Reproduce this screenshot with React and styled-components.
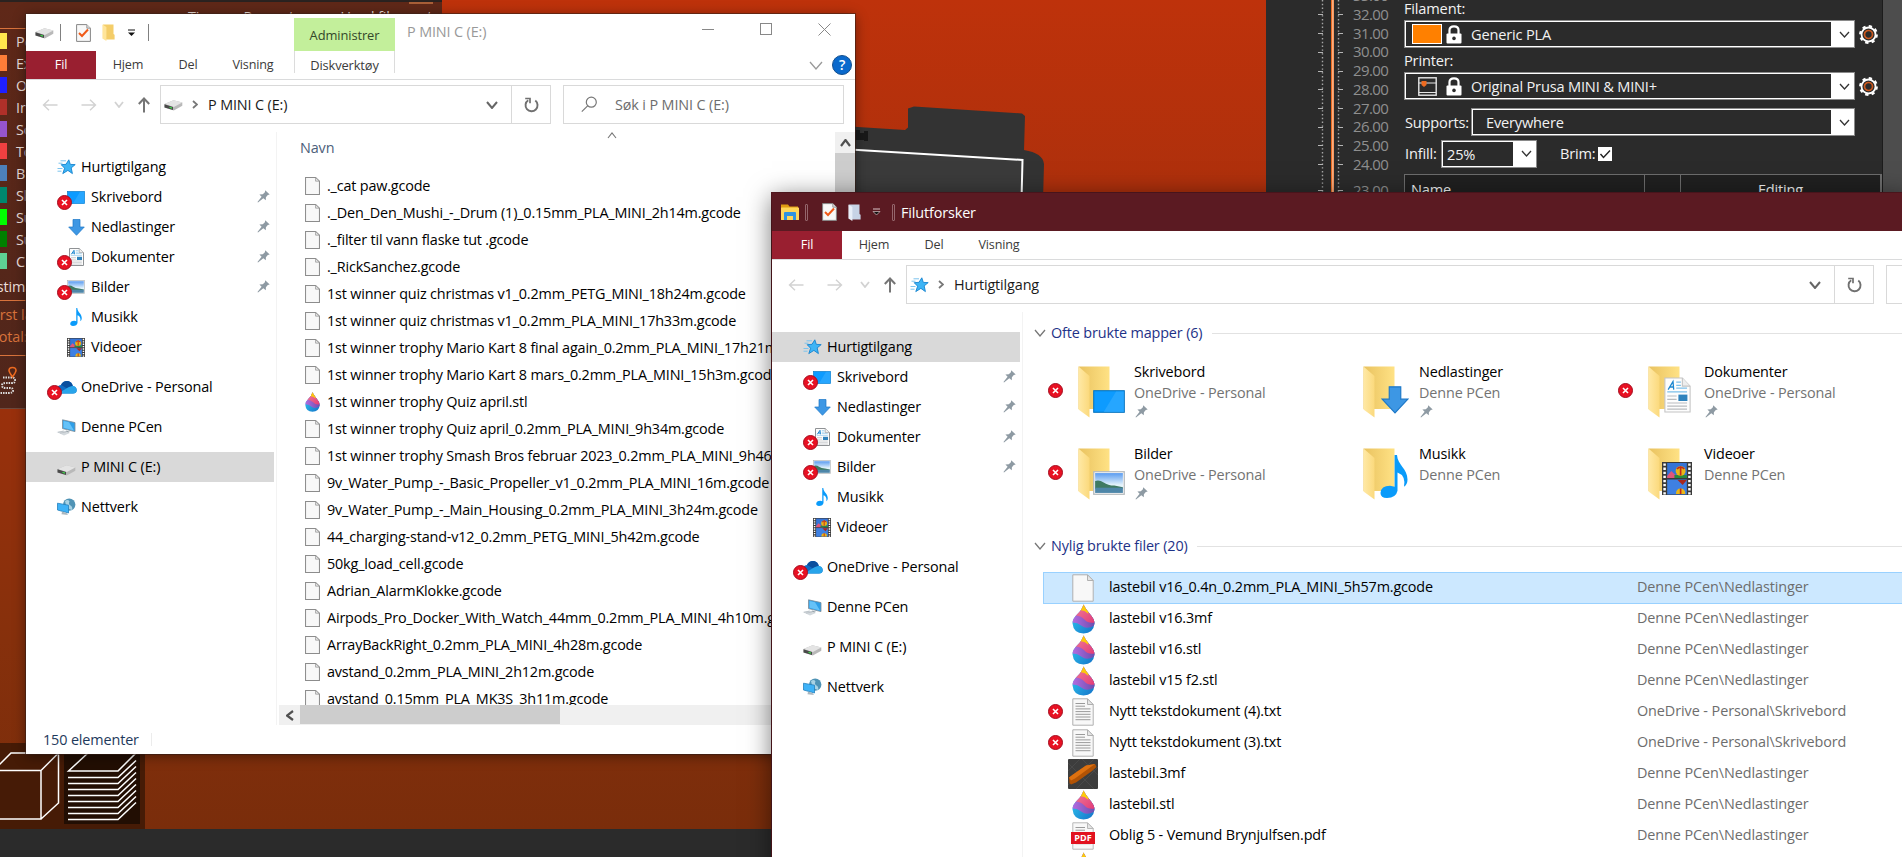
import React from "react";
import styled, { createGlobalStyle } from "styled-components";

const Global = createGlobalStyle`
  * { box-sizing: border-box; }
  html, body { margin: 0; padding: 0; overflow: hidden; }
  body { font-family: "Open Sans", "Noto Sans", sans-serif; font-size: 14.4px; letter-spacing: -0.13px; color: #000; }
  svg { display: block; flex: none; }
`;

/* ---------- desktop ---------- */

const Desktop = styled.div`
  position: relative;
  width: 1902px;
  height: 857px;
  overflow: hidden;
  white-space: nowrap;
`;

const Slicer = styled.div`
  display: flex;
  flex-direction: column;
  height: 857px;
  background: #2b2b2b;
`;

const SlicerMain = styled.div`
  display: flex;
  height: 829px;
`;

const Viewport = styled.div`
  position: relative;
  width: 1266px;
  background: linear-gradient(#be320b 0, #ae300c 190px, #9a300c 400px, #86300c 640px, #7a2d0b 829px);
  overflow: hidden;
`;

const Model = styled.svg`
  position: absolute;
  left: 850px;
  top: 100px;
`;

const Legend = styled.div`
  position: absolute;
  left: 0;
  top: 0;
  width: 442px;
  height: 409px;
  border-top: 2px solid #2a2220;
  border-bottom: 1px solid #6d4a3e;
  background: linear-gradient(#5f2818, #50261b);
  color: #ecdfda;
  overflow: hidden;
`;

const LegendMark = styled.i`
  position: absolute;
  left: 409px;
  top: -2px;
  width: 24px;
  height: 4px;
  background: #a95f38;
`;

const LegendHead = styled.div`
  display: flex;
  gap: 23px;
  height: 27px;
  padding: 5px 0 0 188px;
  line-height: 20px;
  border-bottom: 1px solid #d9733c;
`;

const LegendRows = styled.div`
  padding-top: 1px;
`;

const LegendRow = styled.div`
  display: flex;
  align-items: center;
  gap: 9px;
  height: 22px;
  &::before {
    content: "";
    width: 7px;
    height: 16px;
    background: ${(p) => p.$color};
  }
`;

const LegendTotals = styled.div`
  height: 56px;
  border-top: 1px solid #d9733c;
  border-bottom: 1px solid #d9733c;
  color: #d9733c;
  line-height: 22px;
  padding-top: 3px;
`;

const LegendTitle = styled.div`
  height: 28px;
  line-height: 22px;
  margin-left: -11px;
  padding-top: 4px;
`;

const Pull = styled.div`
  margin-left: ${(p) => -p.$by}px;
`;

const ViewToggle = styled.div`
  position: absolute;
  left: 0;
  bottom: 0;
  width: 145px;
  height: 86px;
  background: #461b06;
`;

/* ---------- slicer side panel ---------- */

const Ruler = styled.div`
  display: flex;
  width: 138px;
  height: 193px;
  overflow: hidden;
  padding-left: 52px;
`;

const RulerNumbers = styled.div`
  display: flex;
  flex-direction: column;
  margin-top: -14px;
  padding-left: 5px;
  color: #8f8f8f;
  font-size: 15px;
  letter-spacing: -0.6px;
`;

const RulerNumber = styled.span`
  flex: none;
  height: ${(p) => p.$h || 18.75}px;
  line-height: 18px;
`;

const Settings = styled.div`
  width: 478px;
  height: 193px;
  overflow: hidden;
  color: #f2f2f2;
  font-size: 14.6px;
  letter-spacing: -0.18px;
`;

const SettingLabel = styled.div`
  height: ${(p) => p.$h}px;
  line-height: ${(p) => p.$lh}px;
`;

const SettingRow = styled.div`
  display: flex;
  align-items: center;
  height: ${(p) => p.$h || 28}px;
`;

const Caption = styled.span`
  width: ${(p) => p.$w}px;
  padding: 0 0 1px 1px;
`;

const Combo = styled.div`
  display: flex;
  align-items: center;
  width: ${(p) => p.$w}px;
  height: 28px;
  flex: none;
  border: 1px solid #8a8a8a;
  outline: 1.5px solid #fff;
  outline-offset: -2.5px;
  padding-left: ${(p) => p.$pad}px;
`;

const ComboValue = styled.span`
  flex: 1;
  padding-left: ${(p) => p.$pl || 0}px;
`;

const ComboArrow = styled.div`
  display: flex;
  align-items: center;
  justify-content: center;
  width: 23px;
  height: 26px;
  padding-left: 3px;
  background: #fff;
`;

const Swatch = styled.div`
  width: 30px;
  height: 20px;
  margin-right: 4px;
  background: #ff8000;
  border: 1px solid #fff;
`;

const CogSlot = styled.div`
  margin-left: 4px;
`;

const Check = styled.div`
  width: 14px;
  height: 14px;
  background: #fff;
`;

const ObjectTable = styled.div`
  display: grid;
  grid-template-columns: 240px 36px 1fr;
  height: 30px;
  margin-top: 11px;
  border: 1px solid #6c6c6c;
  background: #202020;
`;

const ObjectHead = styled.div`
  padding: 4px 0 0 ${(p) => (p.$center ? 0 : 6)}px;
  text-align: ${(p) => (p.$center ? "center" : "left")};
  border-right: 1px solid #6c6c6c;
`;

const PanelScroll = styled.div`
  width: 20px;
  height: 193px;
  background: #4d4d4d;
  border-left: 1px solid #1c1c1c;
`;

/* ---------- explorer windows ---------- */

const Win = styled.div`
  position: absolute;
  left: ${(p) => p.$x}px;
  top: ${(p) => p.$y}px;
  width: ${(p) => p.$w}px;
  height: ${(p) => p.$h}px;
  display: flex;
  flex-direction: column;
  background: #fff;
  box-shadow: ${(p) => (p.$active ? "0 4px 24px rgba(0,0,0,.55), 0 0 0 1px #5b1a22" : "0 2px 12px rgba(0,0,0,.45), 0 0 0 1px rgba(70,40,30,.6)")};
`;

const TitleBar = styled.div`
  display: flex;
  align-items: center;
  height: ${(p) => (p.$active ? 38 : 37)}px;
  flex: none;
  background: ${(p) => (p.$active ? "#5b1a22" : "#fff")};
  color: ${(p) => (p.$active ? "#fff" : "#999")};
  padding-left: 9px;
`;

const Divider = styled.i`
  width: ${(p) => (p.$light ? 3 : 1)}px;
  height: 17px;
  background: ${(p) => (p.$light ? "transparent" : "#808080")};
  border: ${(p) => (p.$light ? "1px solid #94656b" : "none")};
  border-radius: ${(p) => (p.$light ? 1 : 0)}px;
  margin: 0 ${(p) => p.$r || 0}px 0 ${(p) => p.$l || 0}px;
`;

const Gap = styled.i`
  width: ${(p) => p.$w}px;
  flex: none;
`;

const ContextTab = styled.div`
  width: 101px;
  height: 33px;
  margin: 4px 12px 0 145px;
  background: #c3ef9b;
  color: #33472a;
  font-size: 12.9px;
  letter-spacing: -0.1px;
  line-height: 34px;
  text-align: center;
`;

const WinTitle = styled.span`
  flex: 1;
  font-size: 14.4px;
  margin-top: ${(p) => p.$mt || 0}px;
`;

const Controls = styled.div`
  display: flex;
  align-items: center;
  gap: 46px;
  padding: 0 24px 7px 0;
`;

const Tabs = styled.div`
  display: flex;
  align-items: stretch;
  height: 29px;
  flex: none;
  border-bottom: 1px solid #dadbdc;
  font-size: 12.6px;
  letter-spacing: -0.15px;
  line-height: 28px;
  color: #3b3b3b;
`;

const Tab = styled.div`
  width: ${(p) => p.$w}px;
  text-align: center;
  background: ${(p) => (p.$file ? "#991f30" : "transparent")};
  color: ${(p) => (p.$file ? "#fff" : "inherit")};
`;

const ToolTab = styled.div`
  width: 101px;
  height: 22px;
  margin-left: 4px;
  text-align: center;
  font-size: 12.9px;
  border-left: 1px solid #dcdcdc;
  border-right: 1px solid #dcdcdc;
`;

const TabEnd = styled.div`
  display: flex;
  align-items: center;
  gap: 9px;
  margin-left: auto;
  padding-right: 3px;
`;

const HelpBadge = styled.div`
  width: 20px;
  height: 20px;
  border: 1px solid #14508f;
  border-radius: 50%;
  background: #0a69cc;
  color: #fff;
  font-size: 14px;
  font-weight: 600;
  line-height: 18px;
  text-align: center;
`;

const NavBar = styled.div`
  display: flex;
  align-items: center;
  height: 44px;
  flex: none;
  padding: 5px 0 0 16px;
`;

const AddressBox = styled.div`
  display: flex;
  align-items: center;
  width: ${(p) => p.$w}px;
  height: 39px;
  flex: none;
  margin-left: 8px;
  border: 1px solid #d9d9d9;
  padding-left: 3px;
  color: #1a1a1a;
`;

const AddressText = styled.span`
  flex: 1;
  padding-left: 10px;
`;

const RefreshCell = styled.div`
  display: flex;
  align-items: center;
  justify-content: center;
  align-self: stretch;
  width: 39px;
  margin-left: 13px;
  border-left: 1px solid #d9d9d9;
`;

const SearchBox = styled.div`
  display: flex;
  align-items: center;
  gap: 17px;
  width: ${(p) => p.$w}px;
  height: 39px;
  flex: none;
  margin-left: 12px;
  border: 1px solid #d9d9d9;
  padding-left: 17px;
  color: #6d6d6d;
`;

const Body = styled.div`
  display: flex;
  flex: 1;
  min-height: 0;
  margin-top: 8px;
`;

const Sidebar = styled.div`
  width: 251px;
  flex: none;
  border-right: 1px solid #f3f3f3;
  padding-top: 20px;
`;

const SideRow = styled.div`
  display: flex;
  align-items: center;
  width: 248px;
  height: 30px;
  gap: 6px;
  margin-top: ${(p) => (p.$spaced ? 10 : 0)}px;
  padding: 0 4px 0 ${(p) => (p.$sub ? 41 : 31)}px;
  background: ${(p) => (p.$selected ? "#d9d9d9" : "transparent")};
`;

const SideIcon = styled.div`
  position: relative;
  width: 18px;
  height: 20px;
  display: flex;
  align-items: center;
  justify-content: center;
  padding-top: ${(p) => p.$drop || 0}px;
`;

const SideText = styled.span`
  flex: 1;
  line-height: 28px;
`;

const PinSlot = styled.div`
  padding-bottom: 2px;
`;

const BadgeSlot = styled.div`
  position: absolute;
  left: -10px;
  top: 8px;
`;

const Files = styled.div`
  display: flex;
  flex-direction: column;
  flex: 1;
  min-width: 0;
`;

const FilesMain = styled.div`
  display: flex;
  flex: 1;
  min-height: 0;
`;

const FileList = styled.div`
  flex: 1;
  overflow: hidden;
  padding-left: 28px;
`;

const ColumnHead = styled.div`
  display: flex;
  align-items: flex-start;
  height: 40px;
  margin-left: -5px;
  color: #4c607a;
`;

const ColumnName = styled.span`
  width: 307px;
  padding-top: 6px;
`;

const FileRow = styled.div`
  display: flex;
  align-items: center;
  gap: 7px;
  height: 27px;
`;

const FileName = styled.span`
  letter-spacing: -0.17px;
`;

const VScroll = styled.div`
  width: 20px;
  background: #cdcdcd;
`;

const ScrollButton = styled.div`
  display: flex;
  align-items: center;
  justify-content: center;
  width: ${(p) => (p.$h ? 21 : 20)}px;
  height: ${(p) => (p.$h ? 20 : 21)}px;
  background: #f0f0f0;
`;

const HScroll = styled.div`
  display: flex;
  height: 20px;
  margin-left: 2px;
  background: #f0f0f0;
`;

const HThumb = styled.div`
  width: 260px;
  height: 19px;
  background: #cdcdcd;
`;

const Status = styled.div`
  display: flex;
  align-items: center;
  height: 29px;
  flex: none;
  padding-left: 17px;
  color: #1e395b;
  &::after {
    content: "";
    width: 1px;
    height: 13px;
    margin-left: 12px;
    background: #ececec;
  }
`;

const Content = styled.div`
  flex: 1;
  min-width: 0;
  padding-left: 11px;
`;

const GroupHead = styled.div`
  display: flex;
  align-items: center;
  height: 22px;
  margin-top: ${(p) => p.$mt}px;
  color: #1e3287;
  &::after {
    content: "";
    flex: 1;
    height: 1px;
    margin-left: 9px;
    background: #e2e2e2;
  }
`;

const GroupName = styled.span`
  padding: 0 0 2px 5px;
`;

const Tiles = styled.div`
  display: grid;
  grid-template-columns: repeat(3, 285px);
  grid-auto-rows: 82px;
  padding: 18px 0 0 14px;
`;

const Tile = styled.div`
  display: flex;
`;

const TileState = styled.div`
  width: 30px;
  padding-top: 21px;
`;

const TileText = styled.div`
  display: flex;
  flex-direction: column;
  line-height: 21px;
  padding-left: 5px;
  margin-top: -1px;
  color: #737373;
`;

const TileName = styled.span`
  color: #000;
`;

const TilePin = styled.div`
  padding: 2px 0 0 1px;
`;

const Recent = styled.div`
  padding: 15px 0 0 9px;
`;

const RecentRow = styled.div`
  display: flex;
  align-items: center;
  height: ${(p) => (p.$selected ? 32 : 31)}px;
  margin-bottom: ${(p) => (p.$selected ? -1 : 0)}px;
  padding-left: ${(p) => (p.$selected ? 4 : 5)}px;
  background: ${(p) => (p.$selected ? "#cce8ff" : "transparent")};
  border: ${(p) => (p.$selected ? "1px solid #99d1ff" : "none")};
  border-right: none;
`;

const RecentState = styled.div`
  width: 20px;
`;

const RecentIcon = styled.div`
  width: 30px;
  display: flex;
  justify-content: center;
`;

const RecentName = styled.span`
  width: 539px;
  padding: 0 0 3px 11px;
  letter-spacing: -0.15px;
`;

const RecentPath = styled.span`
  color: #6d6d6d;
  padding-bottom: 3px;
  letter-spacing: -0.08px;
`;

/* ---------- icons ---------- */

const Chevron = ({ w = 12, h = 7, color = "#666", sw = 1.3, dir = "down" }) => {
  const paths = {
    down: `M1 1 L${w / 2} ${h - 1} L${w - 1} 1`,
    up: `M1 ${h - 1} L${w / 2} 1 L${w - 1} ${h - 1}`,
    right: `M1 1 L${w - 1} ${h / 2} L1 ${h - 1}`,
    left: `M${w - 1} 1 L1 ${h / 2} L${w - 1} ${h - 1}`,
  };
  return (
    <svg width={w} height={h}><path d={paths[dir]} fill="none" stroke={color} strokeWidth={sw} /></svg>
  );
};

const ErrorBadge = () => (
  <svg width="15" height="15" viewBox="0 0 15 15">
    <circle cx="7.5" cy="7.5" r="7" fill="#e81123" stroke="#a50d1f" />
    <path d="M5 5 L10 10 M10 5 L5 10" stroke="#fff" strokeWidth="1.6" />
  </svg>
);

const Pin = () => (
  <svg width="13" height="13" viewBox="0 0 13 13">
    <path d="M8.2 0.3 L12.7 4.6 L10.8 5.1 L8.9 7.3 L8.8 10.3 L6.3 8.2 L1 12.4 L0.5 12 L4.6 6.8 L2.4 4.4 L5.8 4.2 L7.9 2.3 Z" fill="#8e9aa3" />
  </svg>
);

const Drive = () => (
  <svg width="19" height="12" viewBox="0 0 19 12">
    <path d="M0.5 5 L9.5 1.2 L18.3 3.6 V6.8 L9.8 11.4 L0.5 8.4 Z" fill="#b9b9b9" />
    <path d="M0.5 5 L9.5 1.2 L18.3 3.6 L9.8 7.9 Z" fill="#e4e4e4" />
    <path d="M0.5 5.2 L9 7.9 V11.1 L0.5 8.4 Z" fill="#4a4a4a" />
    <path d="M5.5 8.3 L8 9.1" stroke="#3fdc4a" strokeWidth="1.2" />
  </svg>
);

const Star = () => (
  <svg width="19" height="16" viewBox="0 0 19 16">
    <path d="M11.8 0.8 L13.3 5.4 L18.2 5.6 L14.2 8.9 L15.4 14.6 L10.9 11.4 L5.8 14.6 L7.6 9.2 L4.2 5.7 L9 5.3 Z" fill="#3db4f5" stroke="#1583cf" strokeWidth="0.9" />
    <path d="M3.5 1.8 H9 M1.5 4.2 H5.5 M0.5 9.5 H5.5 M0.5 12.2 H4.5" stroke="#7cc4ee" strokeWidth="1" />
  </svg>
);

const Monitor = ({ w = 18, h = 13 }) => (
  <svg width={w} height={h} viewBox="0 0 18 13" preserveAspectRatio="none">
    <rect x="0.4" y="0.4" width="17.2" height="12.2" fill="#0d9bff" stroke="#0873bd" strokeWidth="0.6" />
    <path d="M6 12.4 L13 0.8 H17.4 V12.4 Z" fill="#37aeff" opacity=".6" />
  </svg>
);

const DownArrow = ({ w = 17, h = 17 }) => (
  <svg width={w} height={h} viewBox="0 0 17 17">
    <path d="M5 0.5 H12 V8 H16.3 L8.5 16.3 L0.7 8 H5 Z" fill="#3d97e4" stroke="#1b77c7" strokeWidth="0.7" />
  </svg>
);

const DocIcon = ({ w = 15, h = 18, edge = "#8f9295" }) => (
  <svg width={w} height={h} viewBox="0 0 15 18" preserveAspectRatio="none">
    <path d="M0.5 0.5 H10.2 L14.5 4.6 V17.5 H0.5 Z" fill="#fdfdfd" stroke={edge} strokeWidth={w > 20 ? 0.6 : 1} />
    <path d="M10.2 0.5 V4.6 H14.5" fill="#eee" stroke={edge} strokeWidth="0.6" />
    <path d="M2.3 6.3 L5 2.3 L5.4 6.3 M3.2 5 H5.3" fill="none" stroke="#1a86d0" strokeWidth={w > 20 ? 0.7 : 1} />
    <path d="M6.8 2.6 H9.4 M6.8 4.2 H9.4 M6.8 5.6 H12.8 M1.8 7.4 H12.8" stroke="#7cc0ea" strokeWidth="0.6" />
    <path d="M1.8 9.5 H7 M1.8 11.2 H7 M1.8 13 H12.8 M1.8 14.6 H12.8 M1.8 16.1 H12.8" stroke="#b9bcbf" strokeWidth="0.6" />
    <rect x="8" y="8.8" width="5" height="3.2" fill="#2f83bd" />
  </svg>
);

const PictureIcon = ({ w = 18, h = 14 }) => (
  <svg width={w} height={h} viewBox="0 0 30 23" preserveAspectRatio="none">
    <defs>
      <linearGradient id="sky" x1="0" y1="0" x2="0" y2="1">
        <stop offset="0" stopColor="#5a9bf0" /><stop offset="0.6" stopColor="#e4f3fb" />
      </linearGradient>
    </defs>
    <rect x="0.7" y="0.7" width="28.6" height="21.6" fill="#fff" stroke="#b5babd" strokeWidth="1.2" />
    <rect x="2" y="2" width="26" height="19" fill="url(#sky)" />
    <path d="M2 9.5 Q6 8 10 11 T20 14 L28 15.5 V17 H2 Z" fill="#3f7a62" />
    <rect x="2" y="16" width="26" height="5" fill="#4e86a8" />
  </svg>
);

const Note = ({ w = 12, h = 18 }) => (
  <svg width={w} height={h} viewBox="0 0 28 42" preserveAspectRatio="none">
    <path d="M14.6 0 H17 C17.5 10 27.5 13 27.5 24 Q27.5 29 24 31 Q26 20 17.5 17 V35 Q16 42 7 42 Q0.5 42 0.5 37 Q1 30 10 30 L14.6 31 Z" fill="#0a9bfa" />
  </svg>
);

const Film = ({ w = 18, h = 19 }) => (
  <svg width={w} height={h} viewBox="0 0 29 33" preserveAspectRatio="none">
    <rect width="29" height="33" fill="#3a3a3a" />
    <rect x="5" y="1" width="19" height="15" fill="#3674d6" />
    <rect x="5" y="17.5" width="19" height="15" fill="#3e80e2" />
    <path d="M5 14 L9 9 L13 13 L17 11 V16 H5 Z" fill="#e0567a" />
    <path d="M12 13 H24 V16 H12 Z" fill="#2a8a3c" />
    <circle cx="18" cy="9" r="4.8" fill="#e8b716" />
    <path d="M18 4.2 V13.5 M14.5 7 Q18 3 21.5 7" stroke="#c22a1d" strokeWidth="1.6" fill="none" />
    <path d="M15 18 H24 L20 23 Z" fill="#a8281e" />
    <path d="M13.5 32 Q13.5 26.5 18 26.5 Q22.5 26.5 22.5 32 Z" fill="#e8b716" />
    <path d="M18 26.5 V32" stroke="#c22a1d" strokeWidth="1.6" />
    <path d="M2.5 1.5 V33 M26.5 1.5 V33" stroke="#fff" strokeWidth="2.4" strokeDasharray="2.3 1.8" />
  </svg>
);

const Cloud = () => (
  <svg width="21" height="14" viewBox="0 0 21 14">
    <path d="M0.5 10 Q0.5 5.5 5 5 Q7 0.5 12 1 Q16 2 16.8 6 Q20.7 7 20.7 10.2 Q20.5 13.5 17 13.5 H5 Q0.8 13.5 0.5 10 Z" fill="#0f6cc4" />
    <path d="M5 4.8 Q7 0.5 12 1 Q16 2 16.8 6 L11 8.4 Z" fill="#0a4f9e" />
    <path d="M3 13 L12 7.6 Q15 5.6 17.5 6.1 Q20.7 7 20.7 10.2 Q20.5 13.5 17 13.5 H5 Z" fill="#28a4ea" />
  </svg>
);

const Computer = () => (
  <svg width="20" height="17" viewBox="0 0 20 17">
    <path d="M6.5 0.8 L19 3.6 V12.6 L6.5 9.6 Z" fill="#2f9fe8" stroke="#7d8b95" strokeWidth="0.8" />
    <path d="M7.5 2 L13 3.2 L18 11.4 L7.5 8.8 Z" fill="#65c2f8" />
    <path d="M10 11.5 L14 12.8 L12 14 L9 13 Z" fill="#98a3ab" />
    <path d="M0.5 13 L7.5 11.4 L13.8 14 L8 16.4 Z" fill="#d3d9dd" />
    <path d="M2 13.3 L7.5 12.2 M4 14.2 L10 13" stroke="#aeb6bc" strokeWidth="0.6" />
  </svg>
);

const NetworkIcon = () => (
  <svg width="19" height="18" viewBox="0 0 19 18">
    <circle cx="12.2" cy="6.6" r="6.2" fill="#4f93b5" />
    <path d="M8 3 Q11 1 12.5 3.5 Q11 6 13.5 7.5 Q16 9 15 12 Q9 11 8 3 Z" fill="#a8d2e4" />
    <path d="M0.5 5.2 L11.5 7.2 V15 L0.5 12 Z" fill="#3eb2f7" stroke="#2482be" strokeWidth="0.8" />
    <path d="M5 13.6 L9.5 15 L11 17 L4.5 16.2 Z" fill="#aab7bf" />
  </svg>
);

const Page = ({ w = 15, h = 18, lines, stroke = "#8c8c8c" }) => (
  <svg width={w} height={h} viewBox="0 0 22 28" preserveAspectRatio="none">
    <path d="M0.8 0.8 H15.5 L21.2 6.5 V27.2 H0.8 Z" fill="#f8f8f8" stroke={stroke} strokeWidth={w < 18 ? 1.5 : 1} />
    <path d="M15.5 0.8 V6.5 H21.2 Z" fill="#e6e6e6" stroke={stroke} strokeWidth="1" />
    {lines && <path d="M3.5 5.5 H13 M3.5 8.2 H13 M3.5 10.9 H18.5 M3.5 13.6 H18.5 M3.5 16.3 H18.5 M3.5 19 H18.5 M3.5 21.7 H18.5" stroke="#9a9a9a" />}
  </svg>
);

const Drop = ({ w = 16, h = 20 }) => (
  <svg width={w} height={h} viewBox="0 0 24 31" preserveAspectRatio="none">
    <defs>
      <clipPath id="dropClip"><path d="M12 0.5 Q14 5 18.5 10 Q23.5 15.5 23.5 20 Q22.5 30.5 12 30.5 Q1.5 30.5 0.5 20 Q0.5 15 5.5 10.5 Q10.5 6 12 0.5 Z" /></clipPath>
      <linearGradient id="dropBlue" x1="0" y1="0" x2="1" y2="1"><stop offset="0" stopColor="#32d2f4" /><stop offset="1" stopColor="#1470c8" /></linearGradient>
      <linearGradient id="dropViolet"><stop offset="0" stopColor="#b56be0" /><stop offset="1" stopColor="#6a4fb0" /></linearGradient>
      <linearGradient id="dropPink" x1="0" y1="0" x2="1" y2="1"><stop offset="0" stopColor="#f08098" /><stop offset="1" stopColor="#e23a78" /></linearGradient>
    </defs>
    <g clipPath="url(#dropClip)">
      <rect width="24" height="31" fill="url(#dropBlue)" />
      <path d="M0 19 Q6 19 10 22.5 Q15 27 24 22 V0 H0 Z" fill="url(#dropViolet)" />
      <path d="M3 12 Q9 12 13 16 Q17 20.5 24 19 V0 H3 Z" fill="url(#dropPink)" />
      <path d="M9 6.5 Q13 6.5 17 10 L18 0 H9 Z" fill="#fccb0a" />
    </g>
  </svg>
);

const Thumb3mf = () => (
  <svg width="30" height="30" viewBox="0 0 30 30">
    <rect width="30" height="30" rx="1" fill="#3d3d3d" />
    <path d="M0 12 L12 0 M0 26 L26 0 M8 30 L30 8 M0 4 L26 30 M14 0 L30 16" stroke="#535353" strokeWidth="0.6" />
    <path d="M1 18.5 L5 15.5 L18 6.5 L27 5 L28.5 8 L24 12 L8 23.5 L3 25.5 L1.5 24 Z" fill="#b25305" />
    <path d="M1 18.5 L5 15.5 L18 6.5 L27 5 L20 10 L7 19.5 L3 21.5 Z" fill="#de7110" />
  </svg>
);

const PdfBand = styled.div`
  position: relative;
  width: 22px;
  height: 28px;
`;

const PdfLabel = styled.span`
  position: absolute;
  left: -1px;
  top: 10px;
  width: 24px;
  height: 12px;
  background: #e2121f;
  color: #fff;
  font-size: 9px;
  font-weight: 700;
  line-height: 12px;
  letter-spacing: 0;
  text-align: center;
`;

const PdfIcon = () => (
  <PdfBand>
    <Page w={22} h={28} lines stroke="#b8b8b8" />
    <PdfLabel>PDF</PdfLabel>
  </PdfBand>
);

const CheckPage = () => (
  <svg width="15" height="18" viewBox="0 0 15 18">
    <path d="M0.6 0.6 H10.8 L14.4 4.2 V17.4 H0.6 Z" fill="#f8f8f8" stroke="#868686" />
    <path d="M10.8 0.6 V4.2 H14.4" fill="#ddd" stroke="#868686" strokeWidth="0.8" />
    <path d="M3 9 L6 12 L12 5.5" fill="none" stroke="#f05a18" strokeWidth="2" />
  </svg>
);

const MiniFolder = ({ pale }) => (
  <svg width="13" height="17" viewBox="0 0 13 17">
    <path d="M1 0.5 H11.5 V10 L12.6 10.8 V15.5 H3 Z" fill={pale ? "#c7d3e6" : "#f4cd69"} />
    <path d="M0.4 0.5 L4.4 3 V17 L0.4 14.4 Z" fill={pale ? "#e8eef8" : "#ffe59b"} />
  </svg>
);

const QuickDrop = ({ pale }) => (
  <svg width="9" height="8" viewBox="0 0 9 8">
    <path d="M1 1 H8" stroke={pale ? "#d9c3c6" : "#111"} />
    <path d="M1 3.5 H8 L4.5 7 Z" fill="#111" stroke={pale ? "#d9c3c6" : "none"} strokeWidth="0.7" />
  </svg>
);

const ExplorerIcon = () => (
  <svg width="18" height="17" viewBox="0 0 18 17">
    <path d="M0 0.5 H7 L8.5 2.5 H17 V6 H0 Z" fill="#e09b12" />
    <rect y="3.5" width="18" height="12.5" rx="0.6" fill="#ffd659" />
    <path d="M3 16 V9 Q3 8 4 8 H14 Q15 8 15 9 V16 H12 V12 H6 V16 Z" fill="#2e92e0" />
  </svg>
);

const Folder = () => (
  <svg width="34" height="54" viewBox="0 0 34 54">
    <defs>
      <linearGradient id="folderBack" x1="0" y1="0" x2="1" y2="0"><stop offset="0" stopColor="#e9c25f" /><stop offset="1" stopColor="#ffe285" /></linearGradient>
      <linearGradient id="folderFront"><stop offset="0" stopColor="#ffe9a6" /><stop offset="1" stopColor="#fbd97c" /></linearGradient>
    </defs>
    <path d="M0.5 0.5 H31.5 V43 H0.5 Z" fill="url(#folderBack)" />
    <path d="M0.5 0.5 L11.5 10 V51.5 L0.5 43.5 Z" fill="url(#folderFront)" />
  </svg>
);

const FolderWrap = styled.div`
  position: relative;
  width: 51px;
  height: 54px;
  margin-top: 4px;
`;

const FolderOverlay = styled.div`
  position: absolute;
  right: ${(p) => p.$r}px;
  bottom: ${(p) => p.$b}px;
`;

const overlays = {
  desktop: { r: 4, b: 7, el: <Monitor w={32} h={23} /> },
  down: { r: 5, b: 6, el: <DownArrow w={28} h={28} /> },
  doc: { r: 8, b: 7, el: <DocIcon w={27} h={36} edge="#c4c4c4" /> },
  picture: { r: 4, b: 7, el: <PictureIcon w={32} h={24} /> },
  note: { r: 6, b: 4, el: <Note w={28} h={43} /> },
  film: { r: 7, b: 7, el: <Film w={30} h={33} /> },
};

const FolderIcon = ({ kind }) => (
  <FolderWrap>
    <Folder />
    <FolderOverlay $r={overlays[kind].r} $b={overlays[kind].b}>{overlays[kind].el}</FolderOverlay>
  </FolderWrap>
);

const Arrow = ({ dir, color }) => {
  const turn = { left: 0, right: 180, up: 90 }[dir];
  return (
    <svg width="16" height="16" viewBox="0 0 16 16">
      <path d="M15.5 8 H1.5 M7 2.8 L1.5 8 L7 13.2" fill="none" stroke={color} strokeWidth={dir === "up" ? 2 : 1.4} transform={`rotate(${turn} 8 8)`} />
    </svg>
  );
};

const Refresh = () => (
  <svg width="15" height="16" viewBox="0 0 15 16">
    <path d="M11.3 3.6 A6 6 0 1 1 4.2 3.3" fill="none" stroke="#707070" strokeWidth="1.9" />
    <path d="M1.2 1.5 H6 V6.2" fill="none" stroke="#707070" strokeWidth="1.7" />
  </svg>
);

const SearchIcon = () => (
  <svg width="17" height="17" viewBox="0 0 17 17">
    <circle cx="10.3" cy="6.2" r="5" fill="none" stroke="#777" strokeWidth="1.2" />
    <path d="M6.6 9.9 L0.8 15.6" stroke="#777" strokeWidth="1.2" />
  </svg>
);

const Lock = () => (
  <svg width="16" height="19" viewBox="0 0 16 19">
    <path d="M3.5 9 V5 Q3.5 1.3 8 1.3 Q12.5 1.3 12.5 5 V9" fill="none" stroke="#fff" strokeWidth="2.2" />
    <rect x="0.5" y="8.5" width="15" height="10" rx="1" fill="#fff" />
    <circle cx="8" cy="13.4" r="1.8" fill="#2b2b2b" />
  </svg>
);

const PrinterIcon = () => (
  <svg width="19" height="19" viewBox="0 0 19 19">
    <rect x="0.8" y="0.8" width="17.4" height="17.4" fill="none" stroke="#e6e6e6" strokeWidth="1.4" />
    <path d="M0.8 6 H18.2 M0.8 15.5 H18.2" stroke="#e6e6e6" strokeWidth="1.2" />
    <path d="M3.5 4 H8.5 V8 L6 10 L3.5 8 Z" fill="#ed6b21" />
  </svg>
);

const Cog = () => (
  <svg width="19" height="19" viewBox="0 0 19 19">
    <circle cx="9.5" cy="9.5" r="7" fill="none" stroke="#fff" strokeWidth="1.8" />
    <circle cx="9.5" cy="9.5" r="8.4" fill="none" stroke="#fff" strokeWidth="2" strokeDasharray="3.3 3.3" />
    <circle cx="9.5" cy="9.5" r="4" fill="none" stroke="#c9581f" strokeWidth="1.7" />
  </svg>
);

const RulerTicks = () => {
  const majors = [13.8, 33, 52, 71, 89, 108, 127, 145, 164, 190];
  return (
    <svg width="30" height="193">
      <path d="M4.5 0 V193 M20.5 0 V193" stroke="#a5a5a5" strokeDasharray="1.4 2.4" strokeWidth="1.4" />
      <rect x="13" width="3" height="193" fill="#ed6b21" />
      <rect x="14.3" width="1.2" height="193" fill="#ffc9a8" />
      {majors.map((y) => (
        <path key={y} d={`M0 ${Math.round(y) + 0.5} H5 M20 ${Math.round(y) + 0.5} H25`} stroke="#b5b5b5" />
      ))}
    </svg>
  );
};

/* ---------- data ---------- */

const legend = [
  ["#ffe64d", "Perimeter"], ["#ff7d38", "External perimeter"], ["#1f1fff", "Overhang perimeter"],
  ["#b03029", "Internal infill"], ["#9654cc", "Solid infill"], ["#f04040", "Top solid infill"],
  ["#4d80ba", "Bridge infill"], ["#00876e", "Skirt/Brim"], ["#00ff00", "Support material"],
  ["#008000", "Support material interface"], ["#5ed194", "Custom"],
];

const files = [
  "._cat paw.gcode", "._Den_Den_Mushi_-_Drum (1)_0.15mm_PLA_MINI_2h14m.gcode", "._filter til vann flaske tut .gcode",
  "._RickSanchez.gcode", "1st winner quiz christmas v1_0.2mm_PETG_MINI_18h24m.gcode",
  "1st winner quiz christmas v1_0.2mm_PLA_MINI_17h33m.gcode", "1st winner trophy Mario Kart 8 final again_0.2mm_PLA_MINI_17h21m.gcode",
  "1st winner trophy Mario Kart 8 mars_0.2mm_PLA_MINI_15h3m.gcode", "1st winner trophy Quiz april.stl",
  "1st winner trophy Quiz april_0.2mm_PLA_MINI_9h34m.gcode", "1st winner trophy Smash Bros februar 2023_0.2mm_PLA_MINI_9h46m.gcode",
  "9v_Water_Pump_-_Basic_Propeller_v1_0.2mm_PLA_MINI_16m.gcode", "9v_Water_Pump_-_Main_Housing_0.2mm_PLA_MINI_3h24m.gcode",
  "44_charging-stand-v12_0.2mm_PETG_MINI_5h42m.gcode", "50kg_load_cell.gcode", "Adrian_AlarmKlokke.gcode",
  "Airpods_Pro_Docker_With_Watch_44mm_0.2mm_PLA_MINI_4h10m.gcode", "ArrayBackRight_0.2mm_PLA_MINI_4h28m.gcode",
  "avstand_0.2mm_PLA_MINI_2h12m.gcode", "avstand_0.15mm_PLA_MK3S_3h11m.gcode",
];

const places = [
  { name: "Hurtigtilgang", icon: <Star /> },
  { name: "Skrivebord", icon: <Monitor />, sub: true, error: true, pin: true },
  { name: "Nedlastinger", icon: <DownArrow />, sub: true, pin: true },
  { name: "Dokumenter", icon: <DocIcon />, sub: true, error: true, pin: true },
  { name: "Bilder", icon: <PictureIcon />, sub: true, error: true, pin: true },
  { name: "Musikk", icon: <Note />, sub: true },
  { name: "Videoer", icon: <Film />, sub: true },
  { name: "OneDrive - Personal", icon: <Cloud />, error: true, spaced: true },
  { name: "Denne PCen", icon: <Computer />, spaced: true },
  { name: "P MINI C (E:)", icon: <Drive />, spaced: true, drop: 6 },
  { name: "Nettverk", icon: <NetworkIcon />, spaced: true },
];

const folders = [
  { name: "Skrivebord", at: "OneDrive - Personal", kind: "desktop", error: true, pin: true },
  { name: "Nedlastinger", at: "Denne PCen", kind: "down", pin: true },
  { name: "Dokumenter", at: "OneDrive - Personal", kind: "doc", error: true, pin: true },
  { name: "Bilder", at: "OneDrive - Personal", kind: "picture", error: true, pin: true },
  { name: "Musikk", at: "Denne PCen", kind: "note" },
  { name: "Videoer", at: "Denne PCen", kind: "film" },
];

const DOWNLOADS = "Denne PCen\\Nedlastinger";
const ONEDRIVE = "OneDrive - Personal\\Skrivebord";
const bigDrop = <Drop w={23} h={30} />;
const bigText = <Page w={22} h={28} lines stroke="#b0b0b0" />;
const recent = [
  { name: "lastebil v16_0.4n_0.2mm_PLA_MINI_5h57m.gcode", at: DOWNLOADS, icon: <Page w={22} h={28} stroke="#b0b0b0" />, selected: true },
  { name: "lastebil v16.3mf", at: DOWNLOADS, icon: bigDrop },
  { name: "lastebil v16.stl", at: DOWNLOADS, icon: bigDrop },
  { name: "lastebil v15 f2.stl", at: DOWNLOADS, icon: bigDrop },
  { name: "Nytt tekstdokument (4).txt", at: ONEDRIVE, icon: bigText, error: true },
  { name: "Nytt tekstdokument (3).txt", at: ONEDRIVE, icon: bigText, error: true },
  { name: "lastebil.3mf", at: DOWNLOADS, icon: <Thumb3mf /> },
  { name: "lastebil.stl", at: DOWNLOADS, icon: bigDrop },
  { name: "Oblig 5 - Vemund Brynjulfsen.pdf", at: DOWNLOADS, icon: <PdfIcon /> },
  { name: "", at: "", icon: bigDrop },
];

/* ---------- parts ---------- */

const SidePanel = ({ selected }) => (
  <Sidebar>
    {places.map((p) => (
      <SideRow key={p.name} $sub={p.sub} $spaced={p.spaced} $selected={p.name === selected}>
        <SideIcon $drop={p.drop}>{p.icon}{p.error && <BadgeSlot><ErrorBadge /></BadgeSlot>}</SideIcon>
        <SideText>{p.name}</SideText>
        {p.pin && <PinSlot><Pin /></PinSlot>}
      </SideRow>
    ))}
  </Sidebar>
);

const NavButtons = () => (
  <>
    <Arrow dir="left" color="#d2d2d2" /><Gap $w={23} />
    <Arrow dir="right" color="#d2d2d2" /><Gap $w={17} />
    <Chevron w={10} h={7} color="#d2d2d2" sw={1.8} /><Gap $w={12} />
    <Arrow dir="up" color="#757575" />
  </>
);

const DropArrow = () => (
  <ComboArrow><Chevron w={11} h={7} color="#333" /></ComboArrow>
);

const PrusaSlicer = () => (
  <Slicer>
    <SlicerMain>
      <Viewport>
        <Model width="200" height="100">
          <path d="M0 26.5 L55 30 L58 27.5 V8.5 L64 6.5 L172 13.5 L175 16 L174 50 Q193 53 194 64 L193 100 H0 Z" fill="#333" />
          <path d="M0 49.5 L172.5 60 L171.5 100 H0 Z" fill="#3b3b3b" />
          <path d="M5 30 H10 V33 H14 V31 H18 V41 H14 V40 H5 Z" fill="#191919" />
          <path d="M0 49.5 L172.5 60 L171.5 100" fill="none" stroke="#fff" strokeWidth="2" />
        </Model>
        <Legend>
          <LegendMark />
          <LegendHead><span>Time</span><span>Percentage</span><span>Used filament</span></LegendHead>
          <LegendRows>
            {legend.map(([color, label]) => <LegendRow key={label} $color={color}>{label}</LegendRow>)}
          </LegendRows>
          <LegendTitle>Estimated printing times</LegendTitle>
          <LegendTotals>
            <Pull $by={11}>First layer:</Pull>
            <Pull $by={9}>Total:</Pull>
          </LegendTotals>
          <svg width="30" height="50">
            <path d="M-2 18 Q-1 24 -5 28 M3 21.5 H12 Q15 21.5 15 24.5 T11 27 H6 Q2 27 2 29.5 T6 32 H10 Q13 32 13 34.5 T9 37 H0" fill="none" stroke="#ddd" strokeWidth="2" strokeDasharray="1.5 1" />
            <path d="M12.5 21 Q9 16 9 14.5 Q9 11.5 12.5 11.5 Q16 11.5 16 14.5 Q16 16 12.5 21 Z" fill="none" stroke="#ed6b21" strokeWidth="1.6" />
          </svg>
        </Legend>
        <ViewToggle>
          <svg width="145" height="86">
            <rect x="64" width="76" height="81" fill="#220e03" />
            <g fill="none" stroke="#fff" strokeWidth="1.5">
              <path d="M-2 27.5 H41 V76 H-2 M41 27.5 L58.5 10 V60 L41 76 M-2 23 L11 10 H58" />
              <path d="M68.5 28 L88 10 H136 L118 28 Z" />
              {[34, 40, 46, 52, 58, 64, 70, 76].map((y) => <path key={y} d={`M68 ${y}.5 H118 L136 ${y - 17}.5`} />)}
            </g>
          </svg>
        </ViewToggle>
      </Viewport>
      <Ruler>
        <RulerTicks />
        <RulerNumbers>
          {["33.00", "32.00", "31.00", "30.00", "29.00", "28.00", "27.00", "26.00", "25.00", "24.00", "23.00"].map((n) => (
            <RulerNumber key={n} $h={n === "24.00" ? 26 : 18.75}>{n}</RulerNumber>
          ))}
        </RulerNumbers>
      </Ruler>
      <Settings>
        <SettingLabel $h={20} $lh={16}>Filament:</SettingLabel>
        <SettingRow>
          <Combo $w={451} $pad={7}>
            <Swatch /><Lock />
            <ComboValue $pl={9}>Generic PLA</ComboValue>
            <DropArrow />
          </Combo>
          <CogSlot><Cog /></CogSlot>
        </SettingRow>
        <SettingLabel $h={24} $lh={24}>Printer:</SettingLabel>
        <SettingRow>
          <Combo $w={451} $pad={13}>
            <PrinterIcon /><Gap $w={9} /><Lock />
            <ComboValue $pl={9}>Original Prusa MINI &amp; MINI+</ComboValue>
            <DropArrow />
          </Combo>
          <CogSlot><Cog /></CogSlot>
        </SettingRow>
        <SettingRow $h={44}>
          <Caption $w={67}>Supports:</Caption>
          <Combo $w={384} $pad={14}>
            <ComboValue>Everywhere</ComboValue>
            <DropArrow />
          </Combo>
        </SettingRow>
        <SettingRow $h={19}>
          <Caption $w={37}>Infill:</Caption>
          <Combo $w={96} $pad={5}>
            <ComboValue>25%</ComboValue>
            <DropArrow />
          </Combo>
          <Gap $w={22} />
          <Caption $w={39}>Brim:</Caption>
          <Check>
            <svg width="14" height="14"><path d="M2.5 7 L5.5 10.5 L12 3.5" fill="none" stroke="#222" strokeWidth="1.4" /></svg>
          </Check>
        </SettingRow>
        <ObjectTable>
          <ObjectHead>Name</ObjectHead><ObjectHead /><ObjectHead $center>Editing</ObjectHead>
        </ObjectTable>
      </Settings>
      <PanelScroll />
    </SlicerMain>
  </Slicer>
);

const RibbonTabs = ({ children }) => (
  <Tabs>
    <Tab $w={70} $file>Fil</Tab><Tab $w={64}>Hjem</Tab><Tab $w={56}>Del</Tab><Tab $w={74}>Visning</Tab>
    {children}
  </Tabs>
);

const DriveWindow = () => (
  <Win $x={26} $y={14} $w={829} $h={740}>
    <TitleBar>
      <Drive /><Divider $l={6} $r={15} />
      <CheckPage /><Gap $w={11} /><MiniFolder /><Gap $w={12} /><QuickDrop /><Divider $l={12} />
      <ContextTab>Administrer</ContextTab>
      <WinTitle $mt={-2}>P MINI C (E:)</WinTitle>
      <Controls>
        <svg width="12" height="13"><path d="M0 6.5 H12" stroke="#888" /></svg>
        <svg width="12" height="12"><rect x="0.5" y="0.5" width="11" height="11" fill="none" stroke="#888" /></svg>
        <svg width="13" height="13"><path d="M0.5 0.5 L12.5 12.5 M12.5 0.5 L0.5 12.5" stroke="#888" /></svg>
      </Controls>
    </TitleBar>
    <RibbonTabs>
      <ToolTab>Diskverktøy</ToolTab>
      <TabEnd>
        <Chevron w={14} h={9} color="#999" />
        <HelpBadge>?</HelpBadge>
      </TabEnd>
    </RibbonTabs>
    <NavBar>
      <NavButtons />
      <AddressBox $w={391}>
        <Drive /><Gap $w={9} /><Chevron dir="right" w={6} h={9} color="#777" sw={1.8} />
        <AddressText>P MINI C (E:)</AddressText>
        <Chevron w={12} h={8} color="#666" sw={2} /><RefreshCell><Refresh /></RefreshCell>
      </AddressBox>
      <SearchBox $w={281}><SearchIcon />Søk i P MINI C (E:)</SearchBox>
    </NavBar>
    <Body>
      <SidePanel selected="P MINI C (E:)" />
      <Files>
        <FilesMain>
          <FileList>
            <ColumnHead><ColumnName>Navn</ColumnName><Chevron dir="up" w={10} h={7} color="#777" sw={1.1} /></ColumnHead>
            {files.map((f) => (
              <FileRow key={f}>
                {f.endsWith(".stl") ? <Drop w={15} /> : <Page />}
                <FileName>{f}</FileName>
              </FileRow>
            ))}
          </FileList>
          <VScroll><ScrollButton><Chevron dir="up" w={11} h={8} color="#505050" sw={2.2} /></ScrollButton></VScroll>
        </FilesMain>
        <HScroll>
          <ScrollButton $h><Chevron dir="left" w={8} h={11} color="#505050" sw={2.2} /></ScrollButton>
          <HThumb />
        </HScroll>
      </Files>
    </Body>
    <Status>150 elementer</Status>
  </Win>
);

const QuickAccessWindow = () => (
  <Win $x={772} $y={193} $w={1140} $h={680} $active>
    <TitleBar $active>
      <ExplorerIcon /><Divider $light $l={6} $r={14} />
      <CheckPage /><Gap $w={11} /><MiniFolder pale /><Gap $w={11} /><QuickDrop pale /><Divider $light $l={11} $r={6} />
      <WinTitle>Filutforsker</WinTitle>
    </TitleBar>
    <RibbonTabs />
    <NavBar>
      <NavButtons />
      <AddressBox $w={968}>
        <Star /><Gap $w={9} /><Chevron dir="right" w={6} h={9} color="#777" sw={1.8} />
        <AddressText>Hurtigtilgang</AddressText>
        <Chevron w={12} h={8} color="#666" sw={2} /><RefreshCell><Refresh /></RefreshCell>
      </AddressBox>
      <SearchBox $w={80} />
    </NavBar>
    <Body>
      <SidePanel selected="Hurtigtilgang" />
      <Content>
        <GroupHead $mt={10}><Chevron w={12} h={8} color="#777" /><GroupName>Ofte brukte mapper (6)</GroupName></GroupHead>
        <Tiles>
          {folders.map((f) => (
            <Tile key={f.name}>
              <TileState>{f.error && <ErrorBadge />}</TileState>
              <FolderIcon kind={f.kind} />
              <TileText>
                <TileName>{f.name}</TileName>
                <span>{f.at}</span>
                {f.pin && <TilePin><Pin /></TilePin>}
              </TileText>
            </Tile>
          ))}
        </Tiles>
        <GroupHead $mt={9}><Chevron w={12} h={8} color="#777" /><GroupName>Nylig brukte filer (20)</GroupName></GroupHead>
        <Recent>
          {recent.map((r, i) => (
            <RecentRow key={i} $selected={r.selected}>
              <RecentState>{r.error && <ErrorBadge />}</RecentState>
              <RecentIcon>{r.icon}</RecentIcon>
              <RecentName>{r.name}</RecentName>
              <RecentPath>{r.at}</RecentPath>
            </RecentRow>
          ))}
        </Recent>
      </Content>
    </Body>
  </Win>
);

export default function App() {
  return (
    <>
      <Global />
      <Desktop>
        <PrusaSlicer />
        <DriveWindow />
        <QuickAccessWindow />
      </Desktop>
    </>
  );
}
